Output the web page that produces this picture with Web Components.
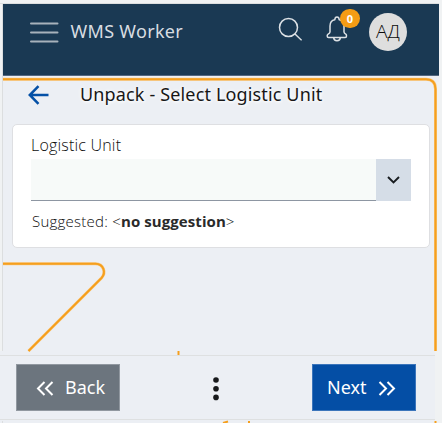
<!DOCTYPE html>
<html lang="en"><head><meta charset="utf-8"><title>WMS Worker</title>
<style>html,body{margin:0;height:100%;overflow:hidden;background:#f0f2f3}body{font-family:"Open Sans","Noto Sans",sans-serif}</style></head>
<body>
<wms-app>
 <wms-header slot="header" heading="WMS Worker" initials="АД" count="0"></wms-header>
 <wms-title slot="content">Unpack - Select Logistic Unit</wms-title>
 <wms-card slot="content">
  <wms-select label="Logistic Unit"></wms-select>
  <wms-hint label="Suggested:">no suggestion</wms-hint>
 </wms-card>
 <wms-footer slot="footer">
  <wms-button kind="back">Back</wms-button>
  <wms-more></wms-more>
  <wms-button kind="next">Next</wms-button>
 </wms-footer>
</wms-app>
<script>
function define(name, html){
  customElements.define(name, class extends HTMLElement{
    constructor(){ super(); this.attachShadow({mode:'open'}); }
    connectedCallback(){
      this.shadowRoot.innerHTML = html;
      this.shadowRoot.querySelectorAll('[data-attr]').forEach(e=>{ e.textContent = this.getAttribute(e.dataset.attr) || ''; });
    }
  });
}
define('wms-app', `<style>
:host{display:grid;grid-template-rows:72px 275px 4px 65px;padding-top:4px;height:423px;box-sizing:border-box;position:relative;isolation:isolate}
.art{position:absolute;inset:0;z-index:-1}
.head{padding:0 3px}
.content{padding:0 12px}
.foot{grid-row:4}
</style>
<svg class="art" width="442" height="423" viewBox="0 0 442 423" fill="none">
<path fill="#eceff4" d="M3 75H439V351H3zM0 351H435V423H0z"/>
<path stroke="#dcdedf" d="M2.500 4V351M0 3.500H439M2.500 421V423"/>
<path fill="#f0f2f3" d="M437 82H442V351H437z"/>
<g stroke="#f9c981" stroke-width="3"><path d="M3 79.300H426Q435.500 79.500 435.500 89V351M3 263.800H95.500C103.500 264 106.500 272.500 101.500 278L28.500 351"/></g>
<g stroke="#f59f1e" stroke-width="2"><path d="M3 79.300H426Q435.500 79.500 435.500 89V351M3 263.800H95.500C103.500 264 106.500 272.500 101.500 278L28.500 351"/><path d="M178.500 351V355M249 421V423M435.500 421V423M223 423L228 421.500"/></g>
</svg>
<div class="head"><slot name="header"></slot></div><div class="content"><slot name="content"></slot></div><div class="foot"><slot name="footer"></slot></div>`);
define('wms-header', `<style>
:host{display:flex;box-sizing:border-box;height:72px;background:#1a3953;border-bottom:1px solid #53677f;padding:9px 32px 0 27px;align-items:flex-start}
.menu{margin-top:8px}
.name{font:400 18px/36px "Noto Sans","Open Sans",sans-serif;letter-spacing:.3px;color:#d8dde1;margin-left:11.500px;flex:1;white-space:nowrap}
.search{margin:4px 24px 0 0}
.bell{position:relative;margin:2px 19px 0 0;width:24px;height:28px}
.badge{position:absolute;left:14px;top:-6px;width:20px;height:19px;border-radius:10px;background:#f59c14;color:#fff;font:700 11px/19px "Open Sans",sans-serif;text-align:center}
.avatar{width:38px;height:38px;border-radius:50%;background:#dedede;color:#0c0c0c;font-size:19px;font-weight:300;line-height:36px;text-align:center}
</style>
<svg class="menu" width="29" height="24" fill="none" stroke="#a7b2bb" stroke-width="2" stroke-linecap="round"><path d="M1 2.500H27.500M1 11.500H27.500M1 20.500H27.500"/></svg>
<span class="name" data-attr="heading"></span>
<svg class="search" width="24" height="25" fill="none" stroke="#dce1e5" stroke-width="1.500"><circle cx="10.500" cy="10.500" r="9"/><path d="M17 17L23.600 23.300"/></svg>
<span class="bell"><svg width="24" height="28" fill="none" stroke="#dce1e5" stroke-width="1.500" stroke-linejoin="round"><path d="M8.800 4.700Q9 2 11 2Q13 2 13.200 4.700Q18 5.500 18 11V17Q18 18.300 20 19.300Q20.500 20 20.500 21Q20.500 22.500 19.200 22.500H2.600Q1.200 22.500 1.200 21Q1.200 19.900 1.900 19.300Q4 18.200 4 17V11Q4 5.500 8.800 4.700ZM7.600 22.500Q7.800 25.700 11 25.700Q14.200 25.700 14.400 22.500"/></svg><span class="badge" data-attr="count"></span></span>
<span class="avatar" data-attr="initials"></span>`);
define('wms-title', `<style>
:host{display:flex;height:48px;padding-left:16px;color:#171717;font:400 18px/36px "Noto Sans","Open Sans",sans-serif;letter-spacing:.15px;white-space:nowrap;text-shadow:1px 1px 3px #fff,0 0 4px #fff}
svg{margin:9px 31px 0 0;flex:none}</style>
<svg width="21" height="20" fill="none" stroke="#0450a6" stroke-width="2.500"><path d="M20.500 10H2M10.500 1.200L1.800 10L10.500 18.800"/></svg><span><slot></slot></span>`);
define('wms-card', `<style>
:host{display:block;box-sizing:border-box;width:418px;height:124px;padding:9px 18px 0;background:#fff;border:1px solid #dedfe2;border-radius:5px}</style><slot></slot>`);
define('wms-select', `<style>
:host{display:block;color:#0c0c0c}
label{display:block;font-size:16px;font-weight:300;letter-spacing:.2px;line-height:22px;height:25px}
.box{display:flex;width:380px;height:42px}
.field{flex:1;background:#f7faf9;border-bottom:1px solid #8d96a2;box-sizing:border-box}
.drop{width:35px;background:#d5dde7;display:grid;place-items:center}
</style><label data-attr="label"></label><div class="box"><div class="field"></div><div class="drop"><svg width="13" height="9" fill="none" stroke="#181c20" stroke-width="1.900"><path d="M1 1L6.500 6.500L12 1"/></svg></div></div>`);
define('wms-hint', `<style>
:host{display:block;color:#0c0c0c;font-size:15px;font-weight:300;letter-spacing:.25px;line-height:22px;padding:9px 0 0 1px}b{font-weight:700;letter-spacing:.07px;color:#2a2a2a}</style><span data-attr="label"></span> &lt;<b><slot></slot></b>&gt;`);
define('wms-footer', `<style>
:host{display:flex;width:435px;height:65px;box-sizing:border-box;border-top:1px solid #dee0e1;border-bottom:1px solid #dee0e1;padding:8px 19px 0 16px;justify-content:space-between}</style><slot></slot>`);
define('wms-button', `<style>
:host{box-sizing:border-box;width:104px;height:47px;display:flex;align-items:center;color:#fff;font:400 18px/44px "Noto Sans","Open Sans",sans-serif;background:#6c757e;border:1px solid #9198a0;padding:0 14px 2px 19px;justify-content:space-between}
:host([kind=next]){flex-direction:row-reverse;background:#044ea5;border-color:#3b75bb;padding:0 19px 2px 14px}
:host([kind=next]) svg{transform:scaleX(-1)}
svg{margin-top:4px}
</style><svg width="18" height="15" fill="none" stroke="#fff" stroke-width="2"><path d="M8.500 1L2 7.500L8.500 14M16.500 1L10 7.500L16.500 14"/></svg><span><slot></slot></span>`);
define('wms-more', `<style>
:host{display:flex;padding:12px 0 0 0}</style><svg width="6" height="26" fill="#17191b"><circle cx="3" cy="4" r="2.800"/><circle cx="3" cy="12.700" r="2.800"/><circle cx="3" cy="21.400" r="2.800"/></svg>`);
</script>
</body></html>
